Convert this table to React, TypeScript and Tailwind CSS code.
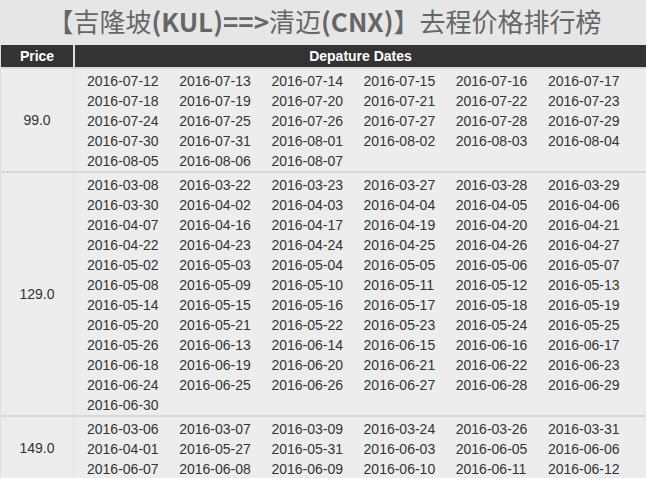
const seq = (month: string, from: number, to: number) =>
  Array.from({ length: to - from + 1 }, (_, i) => `2016-${month}-${String(from + i).padStart(2, "0")}`);

const d = (list: string) => list.split(" ").map((x) => `2016-${x}`);

const ROWS: { price: string; dates: string[] }[] = [
  {
    price: "99.0",
    dates: [...seq("07", 12, 31), ...seq("08", 1, 7)],
  },
  {
    price: "129.0",
    dates: d(
      "03-08 03-22 03-23 03-27 03-28 03-29 03-30 04-02 04-03 04-04 04-05 04-06 " +
        "04-07 04-16 04-17 04-19 04-20 04-21 04-22 04-23 04-24 04-25 04-26 04-27 " +
        "05-02 05-03 05-04 05-05 05-06 05-07 05-08 05-09 05-10 05-11 05-12 05-13 " +
        "05-14 05-15 05-16 05-17 05-18 05-19 05-20 05-21 05-22 05-23 05-24 05-25 " +
        "05-26 06-13 06-14 06-15 06-16 06-17 06-18 06-19 06-20 06-21 06-22 06-23 " +
        "06-24 06-25 06-26 06-27 06-28 06-29 06-30",
    ),
  },
  {
    price: "149.0",
    dates: d(
      "03-06 03-07 03-09 03-24 03-26 03-31 04-01 05-27 05-31 06-03 06-05 06-06 " +
        "06-07 06-08 06-09 06-10 06-11 06-12",
    ),
  },
];

export default function App() {
  return (
    <div className="min-h-screen w-[646px] bg-[#e6e6e6] font-['Liberation_Sans',Arial,sans-serif] text-[#333]">
      <h1 className="flex h-[45px] items-center justify-center pb-[4px] pl-[3px] text-[26px] font-normal leading-none text-[#666] font-['Noto_Sans_CJK_SC',sans-serif]">
        <span>【吉隆坡</span>
        <span className="font-bold">(KUL)==&gt;</span>
        <span>清迈</span>
        <span className="font-bold">(CNX)</span>
        <span>】去程价格排行榜</span>
      </h1>

      <div className="border-l border-[#dedede]">
        <div className="flex h-[22px] items-center bg-[#dedede] text-[14px] font-bold text-white">
          <div className="flex h-full w-[72px] items-center justify-center bg-[#333]">Price</div>
          <div className="ml-[2px] flex h-full flex-1 items-center justify-center bg-[#333]">
            Depature Dates
          </div>
        </div>

        {ROWS.map((row) => (
          <div key={row.price} className="flex border-t-2 border-[#d8d8d8] first:border-t">
            <div className="flex w-[72px] items-center justify-center bg-[#ededed] text-[14px]">
              {row.price}
            </div>
            <div className="ml-[2px] flex-1 bg-[#ededed] pl-[12px] pt-[2px]">
              <div className="grid grid-cols-[repeat(6,92.2px)] text-[14px] leading-[20px]">
                {row.dates.map((date) => (
                  <span key={date}>{date}</span>
                ))}
              </div>
            </div>
          </div>
        ))}
      </div>
    </div>
  );
}
